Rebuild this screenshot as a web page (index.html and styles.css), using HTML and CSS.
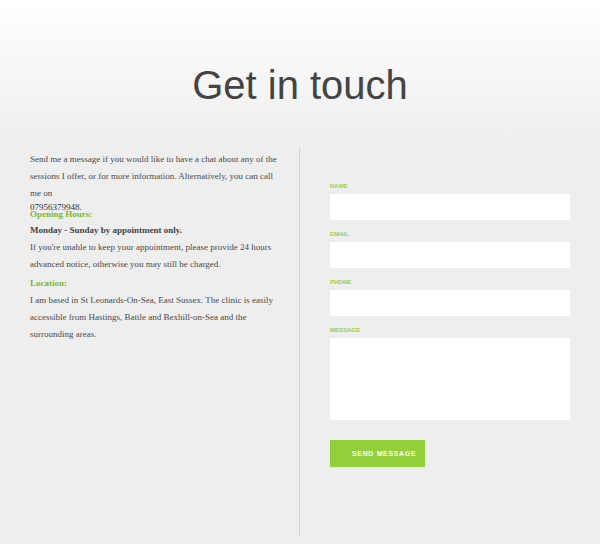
FILE: index.html
```html
<!DOCTYPE html>
<html lang="en">
<head>
<meta charset="utf-8">
<title>Get in touch</title>
<link rel="stylesheet" href="styles.css">
</head>
<body>
<section class="contact">
  <h1 class="title">Get in touch</h1>
  <div class="columns">
    <div class="info">
      <p class="intro">Send me a message if you would like to have a chat about any of the sessions I offer, or for more information. Alternatively, you can call me on</p>
      <p class="phone">07956379948.</p>
      <h4 class="heading heading-hours">Opening Hours:</h4>
      <p class="strong">Monday - Sunday by appointment only.</p>
      <p class="text">If you're unable to keep your appointment, please provide 24 hours advanced notice, otherwise you may still be charged.</p>
      <h4 class="heading heading-loc">Location:</h4>
      <p class="text">I am based in St Leonards-On-Sea, East Sussex. The clinic is easily accessible from Hastings, Battle and Bexhill-on-Sea and the surrounding areas.</p>
    </div>
    <form class="form">
      <label class="label" for="name">Name</label>
      <input class="field" id="name" type="text">
      <label class="label" for="email">Email</label>
      <input class="field" id="email" type="email">
      <label class="label" for="phone">Phone</label>
      <input class="field" id="phone" type="tel">
      <label class="label" for="message">Message</label>
      <textarea class="field area" id="message"></textarea>
      <button class="send" type="button">Send Message</button>
    </form>
  </div>
</section>
</body>
</html>
```

FILE: styles.css
```css
html, body {
  margin: 0;
  padding: 0;
}
body {
  width: 600px;
  height: 544px;
  overflow: hidden;
  background: linear-gradient(to bottom, #ffffff 0px, #eeeeee 145px) no-repeat, #eeeeee;
  font-family: "Liberation Serif", "Times New Roman", serif;
}
.contact {
  display: flex;
  flex-direction: column;
}
.title {
  margin: 0;
  padding-top: 62px;
  font-family: "Liberation Sans", Arial, sans-serif;
  font-weight: 400;
  font-size: 40px;
  line-height: 46px;
  color: #444444;
  text-align: center;
}
.columns {
  margin-top: 39px;
  padding: 0 30px;
  display: grid;
  grid-template-columns: 270px 240px;
  height: 390px;
}
.info {
  border-right: 1px solid #d2d2d2;
  padding: 3.5px 20px 0 0;
  color: #4a4a4a;
  font-size: 9px;
}
.info p, .info h4 {
  margin: 0;
}
.intro, .text, .strong {
  line-height: 17px;
}
.phone {
  line-height: 11px;
  color: #333333;
}
.strong {
  font-weight: 700;
  color: #444444;
}
.heading {
  font-size: 9px;
  font-weight: 700;
  color: #7cb82f;
}
.heading-hours {
  margin-top: -7px !important;
  line-height: 16px;
}
.heading-loc {
  margin-top: 2px !important;
  line-height: 17px;
}
.form {
  padding: 35px 0 0 30px;
  display: flex;
  flex-direction: column;
  align-items: flex-start;
}
.label {
  display: block;
  font-family: "Liberation Sans", Arial, sans-serif;
  font-size: 6px;
  font-weight: 700;
  line-height: 8px;
  text-transform: uppercase;
  color: #9acd4a;
  margin-bottom: 4px;
}
.field {
  box-sizing: border-box;
  width: 240px;
  height: 26px;
  margin: 0 0 10px 0;
  border: none;
  background: #ffffff;
  padding: 0;
}
.area {
  height: 82px;
  resize: none;
}
.send {
  margin-top: 10px;
  width: 95px;
  height: 27px;
  border: none;
  background: #92cf3a;
  color: #ffffff;
  font-family: "Liberation Sans", Arial, sans-serif;
  font-size: 7px;
  font-weight: 700;
  letter-spacing: 0.65px;
  text-transform: uppercase;
  text-align: left;
  padding: 0 0 0 22px;
}
```
